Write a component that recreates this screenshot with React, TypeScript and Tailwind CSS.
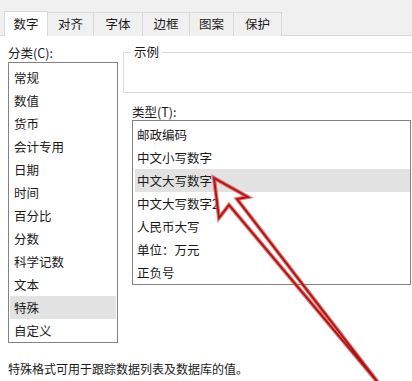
import React from "react";

const tabs = [
  { label: "数字", w: "w-[44px]", active: true },
  { label: "对齐", w: "w-[47px]" },
  { label: "字体", w: "w-[50px]" },
  { label: "边框", w: "w-[48px]" },
  { label: "图案", w: "w-[45px]" },
  { label: "保护", w: "w-[49px]" },
];

const categories = [
  "常规",
  "数值",
  "货币",
  "会计专用",
  "日期",
  "时间",
  "百分比",
  "分数",
  "科学记数",
  "文本",
  "特殊",
  "自定义",
];

const types = [
  "邮政编码",
  "中文小写数字",
  "中文大写数字",
  "中文大写数字2",
  "人民币大写",
  "单位：万元",
  "正负号",
];

export default function App() {
  return (
    <div
      className="relative w-[412px] h-[381px] overflow-hidden bg-white text-[#1a1a1a] text-[12.5px]"
      style={{ fontFamily: '"Noto Sans CJK SC", "Noto Sans", sans-serif' }}
    >
      {/* Tab strip */}
      <div className="h-[36px] bg-[#f0f0f0] flex items-end pl-[4px] border-b border-[#d9d9d9]">
        {tabs.map((t) => (
          <div
            key={t.label}
            className={`${t.w} h-[24px] -mb-px flex items-center justify-center border border-b-0 border-[#d9d9d9] -ml-px first:ml-0 ${
              t.active ? "bg-white h-[25px]" : "bg-[#f0f0f0]"
            }`}
          >
            <span className="leading-none">{t.label}</span>
          </div>
        ))}
      </div>

      {/* Body */}
      <div className="flex pt-[8px]">
        {/* Category column */}
        <div className="ml-[8px] w-[110px] flex flex-col">
          <div className="h-[18px] leading-[18px]">分类(C):</div>
          <div className="border border-[#828282] h-[281px] pt-[3px] px-px">
            {categories.map((c) => (
              <div
                key={c}
                className={`h-[23px] leading-[23px] pl-[4px] ${
                  c === "特殊" ? "bg-[#e2e2e2]" : ""
                }`}
              >
                {c}
              </div>
            ))}
          </div>
        </div>

        {/* Right column */}
        <div className="ml-[5px] flex-1 flex flex-col">
          <div className="relative mt-[8px] h-[41px] border border-r-0 border-[#dcdcdc]">
            <span className="absolute left-[7px] -top-[9px] bg-white px-[3px] leading-[16px]">
              示例
            </span>
          </div>
          <div className="ml-[9px] mt-[10px] h-[17px] leading-[17px]">类型(T):</div>
          <div className="ml-[9px] mr-px border border-[#828282] h-[165px] pt-[2px] pl-[2px]">
            {types.map((t) => (
              <div
                key={t}
                className={`h-[23px] leading-[23px] pl-[2px] ${
                  t === "中文大写数字" ? "bg-[#e2e2e2]" : ""
                }`}
              >
                {t}
              </div>
            ))}
          </div>
        </div>
      </div>

      <div className="ml-[8px] mt-[18px] text-[12px] leading-[16px]">
        特殊格式可用于跟踪数据列表及数据库的值。
      </div>

      {/* Red annotation arrow (outlined) */}
      <svg
        className="absolute inset-0 pointer-events-none"
        width="412"
        height="381"
        viewBox="0 0 412 381"
      >
        <polygon
          points="214,178 248,197 237,199 380,385 229,205 219,218"
          fill="none"
          stroke="#e8413f"
          strokeOpacity="0.75"
          strokeWidth="4"
          strokeLinejoin="miter"
        />
        <polygon
          points="214,178 248,197 237,199 380,385 229,205 219,218"
          fill="none"
          stroke="#a01818"
          strokeWidth="1.8"
          strokeLinejoin="miter"
        />
      </svg>
    </div>
  );
}
